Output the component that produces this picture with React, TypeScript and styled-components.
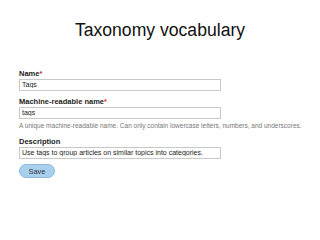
import styled, { createGlobalStyle } from 'styled-components'

const GlobalStyle = createGlobalStyle`
  html, body {
    margin: 0;
    padding: 0;
    background: #ffffff;
    font-family: "Liberation Sans", Arial, sans-serif;
  }
`

const Page = styled.div`
  width: 320px;
  height: 240px;
  box-sizing: border-box;
  padding: 18px 19px 0 19px;
  display: flex;
  flex-direction: column;
`

const Title = styled.h1`
  margin: 0 0 27px 0;
  font-size: 17.6px;
  font-weight: normal;
  text-align: center;
  color: #111;
  line-height: 24px;
`

const Field = styled.div<{ $space?: number }>`
  display: flex;
  flex-direction: column;
  margin-bottom: ${p => p.$space ?? 6}px;
`

const Label = styled.label`
  font-size: 7.5px;
  font-weight: bold;
  color: #222;
  line-height: 9px;
  margin-bottom: 1px;
`

const Required = styled.span`
  color: #d22;
`

const Input = styled.input`
  box-sizing: border-box;
  width: 202px;
  height: 12px;
  padding: 0 2px 1px 2px;
  border: 1px solid #c8c8c8;
  font-family: "Liberation Sans", Arial, sans-serif;
  font-size: 7px;
  line-height: normal;
  color: #222;
  outline: none;
`

const Help = styled.div`
  font-size: 6.5px;
  color: #777;
  line-height: 10px;
  margin-top: 2px;
  white-space: nowrap;
`

const SaveButton = styled.button`
  align-self: flex-start;
  width: 36px;
  height: 14px;
  padding: 0;
  border: 1px solid #8cb8dc;
  border-radius: 7px;
  background: #a8d0ee;
  color: #334;
  font-family: "Liberation Sans", Arial, sans-serif;
  font-size: 7.5px;
`

export default function App() {
  return (
    <>
      <GlobalStyle />
      <Page>
        <Title>Taxonomy vocabulary</Title>
        <Field $space={6}>
          <Label>Name<Required>*</Required></Label>
          <Input defaultValue="Tags" />
        </Field>
        <Field $space={6}>
          <Label>Machine-readable name<Required>*</Required></Label>
          <Input defaultValue="tags" />
          <Help>A unique machine-readable name. Can only contain lowercase letters, numbers, and underscores.</Help>
        </Field>
        <Field $space={5}>
          <Label>Description</Label>
          <Input defaultValue="Use tags to group articles on similar topics into categories." />
        </Field>
        <SaveButton>Save</SaveButton>
      </Page>
    </>
  )
}
